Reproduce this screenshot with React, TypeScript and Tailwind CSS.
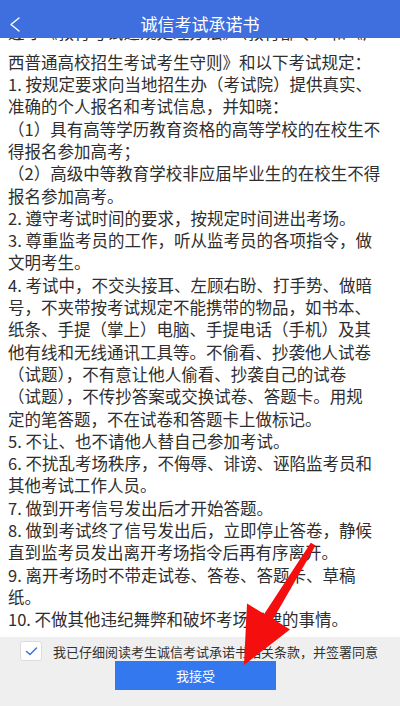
import React from "react";

// Each visual line of the pledge, kept as shown so wrapping stays fixed
const lines = [
  "遵守《教育考试违规处理办法》（教育部令）和《广",
  "西普通高校招生考试考生守则》和以下考试规定：",
  "1. 按规定要求向当地招生办（考试院）提供真实、",
  "准确的个人报名和考试信息，并知晓：",
  "（1）具有高等学历教育资格的高等学校的在校生不",
  "得报名参加高考；",
  "（2）高级中等教育学校非应届毕业生的在校生不得",
  "报名参加高考。",
  "2. 遵守考试时间的要求，按规定时间进出考场。",
  "3. 尊重监考员的工作，听从监考员的各项指令，做",
  "文明考生。",
  "4. 考试中，不交头接耳、左顾右盼、打手势、做暗",
  "号，不夹带按考试规定不能携带的物品，如书本、",
  "纸条、手提（掌上）电脑、手提电话（手机）及其",
  "他有线和无线通讯工具等。不偷看、抄袭他人试卷",
  "（试题），不有意让他人偷看、抄袭自己的试卷",
  "（试题），不传抄答案或交换试卷、答题卡。用规",
  "定的笔答题，不在试卷和答题卡上做标记。",
  "5. 不让、也不请他人替自己参加考试。",
  "6. 不扰乱考场秩序，不侮辱、诽谤、诬陷监考员和",
  "其他考试工作人员。",
  "7. 做到开考信号发出后才开始答题。",
  "8. 做到考试终了信号发出后，立即停止答卷，静候",
  "直到监考员发出离开考场指令后再有序离开。",
  "9. 离开考场时不带走试卷、答卷、答题卡、草稿",
  "纸。",
  "10. 不做其他违纪舞弊和破坏考场纪律的事情。",
];

export default function App() {
  return (
    <div
      className="relative flex h-[706px] w-[400px] flex-col overflow-hidden bg-white"
      style={{ fontFamily: '"Noto Sans CJK SC", "Noto Sans", sans-serif' }}
    >
      {/* Top bar */}
      <header className="relative z-10 flex h-[38px] shrink-0 items-center justify-center bg-[#3f6fdf] pt-[8px]">
        <svg className="absolute left-[9px] top-[17px] h-[15px] w-[12px]" viewBox="0 0 12 15" fill="none">
          <polyline points="10,1 2,7.5 10,14" stroke="white" strokeWidth="1.4" strokeLinecap="round" strokeLinejoin="round" />
        </svg>
        <h1 className="text-[17px] font-normal leading-none text-white">诚信考试承诺书</h1>
      </header>

      {/* Scrolled pledge text, first line mostly under the bar */}
      <main className="flex-1 overflow-hidden">
        <div className="-mt-[9.5px] pl-[8px] text-[16.5px] leading-[22.3px] text-[#2e2e2e]">
          {lines.map((l, i) => (
            <div key={i} className={i === 0 ? "relative -top-[8px] whitespace-nowrap" : "whitespace-nowrap"}>
              {l}
            </div>
          ))}
        </div>
      </main>

      {/* Agree bar */}
      <footer className="h-[69px] shrink-0 bg-[#efefef] pt-[4px]">
        <div className="flex h-[20px] items-center">
          <span className="ml-[20px] flex h-[20px] w-[22px] items-center justify-center rounded-[3px] border border-[#dcdcdc] bg-white">
            <svg className="h-[10px] w-[13px]" viewBox="0 0 13 10" fill="none">
              <polyline points="1.5,5.5 5,8.5 11.5,2" stroke="#3f6fdf" strokeWidth="1.5" strokeLinecap="round" strokeLinejoin="round" />
            </svg>
          </span>
          <span className="ml-[11px] whitespace-nowrap text-[13px] leading-none text-[#333]">
            我已仔细阅读考生诚信考试承诺书相关条款，并签署同意
          </span>
        </div>
        <button className="ml-[115px] flex h-[29px] w-[161px] items-center justify-center bg-[#3478ef] text-[13px] text-white">
          我接受
        </button>
      </footer>

      {/* Red arrow annotation */}
      <svg className="pointer-events-none absolute left-0 top-0 z-20 h-[706px] w-[400px]" viewBox="0 0 400 706">
        <polygon
          points="310.8,542.8 315.6,545.4 273.2,619 290,629.5 244,665 247,603.5 264.2,614"
          fill="#f50e0e"
        />
      </svg>
    </div>
  );
}
